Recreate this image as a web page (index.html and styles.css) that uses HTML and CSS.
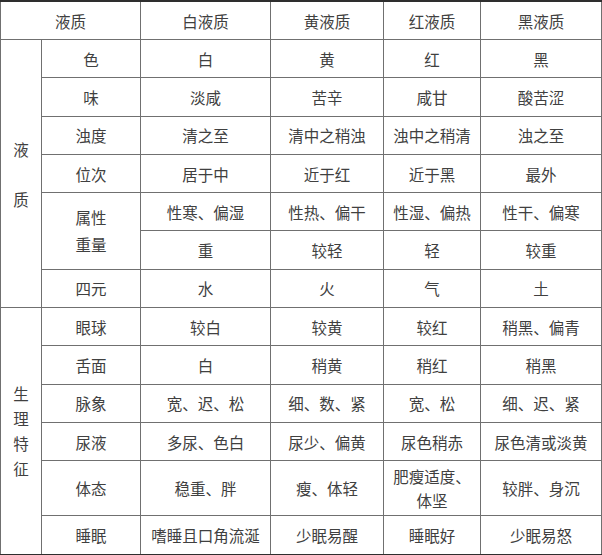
FILE: index.html
```html
<!DOCTYPE html>
<html lang="zh">
<head>
<meta charset="utf-8">
<link rel="stylesheet" href="styles.css">
</head>
<body>
<table class="grid">
  <colgroup>
    <col class="c0"><col class="c1"><col class="c2"><col class="c3"><col class="c4"><col class="c5">
  </colgroup>
  <tr class="head">
    <td colspan="2">液质</td><td>白液质</td><td>黄液质</td><td>红液质</td><td>黑液质</td>
  </tr>
  <tr class="r">
    <td rowspan="7" class="group g1">液<br>质</td>
    <td>色</td><td>白</td><td>黄</td><td>红</td><td>黑</td>
  </tr>
  <tr class="r"><td>味</td><td>淡咸</td><td>苦辛</td><td>咸甘</td><td>酸苦涩</td></tr>
  <tr class="r"><td>浊度</td><td>清之至</td><td>清中之稍浊</td><td>浊中之稍清</td><td>浊之至</td></tr>
  <tr class="r"><td>位次</td><td>居于中</td><td>近于红</td><td>近于黑</td><td>最外</td></tr>
  <tr class="r"><td rowspan="2" class="two">属性<br>重量</td><td>性寒、偏湿</td><td>性热、偏干</td><td>性湿、偏热</td><td>性干、偏寒</td></tr>
  <tr class="r"><td>重</td><td>较轻</td><td>轻</td><td>较重</td></tr>
  <tr class="r"><td>四元</td><td>水</td><td>火</td><td>气</td><td>土</td></tr>
  <tr class="r sep">
    <td rowspan="6" class="group g2">生<br>理<br>特<br>征</td>
    <td>眼球</td><td>较白</td><td>较黄</td><td>较红</td><td>稍黑、偏青</td>
  </tr>
  <tr class="r"><td>舌面</td><td>白</td><td>稍黄</td><td>稍红</td><td>稍黑</td></tr>
  <tr class="r"><td>脉象</td><td>宽、迟、松</td><td>细、数、紧</td><td>宽、松</td><td>细、迟、紧</td></tr>
  <tr class="r"><td>尿液</td><td>多尿、色白</td><td>尿少、偏黄</td><td>尿色稍赤</td><td>尿色清或淡黄</td></tr>
  <tr class="r tall"><td>体态</td><td>稳重、胖</td><td>瘦、体轻</td><td class="two2">肥瘦适度、<br>体坚</td><td>较胖、身沉</td></tr>
  <tr class="r last"><td>睡眠</td><td>嗜睡且口角流涎</td><td>少眠易醒</td><td>睡眠好</td><td>少眠易怒</td></tr>
</table>
</body>
</html>
```

FILE: styles.css
```css
html, body {
  margin: 0;
  padding: 0;
  background: #ffffff;
}

.grid {
  border-collapse: collapse;
  table-layout: fixed;
  width: 601px;
  font-family: "Noto Sans CJK SC", "Noto Sans CJK JP", sans-serif;
  font-size: 15.5px;
  color: #404040;
  border-top: 2px solid #2e2e2e;
  border-bottom: 2px solid #2e2e2e;
}

.c0 { width: 41px; }
.c1 { width: 99px; }
.c2 { width: 130px; }
.c3 { width: 113px; }
.c4 { width: 97px; }
.c5 { width: 121px; }

.grid td {
  border: 1px solid #707070;
  padding: 0;
  text-align: center;
  vertical-align: middle;
  line-height: 20px;
  white-space: nowrap;
}

.grid tr:first-child td {
  border-top: 2px solid #2e2e2e;
}

.grid tr.last td {
  border-bottom: 2px solid #2e2e2e;
}

.head { height: 38.5px; }
.r { height: 38.3px; }
.r.tall { height: 55px; }
.r.last { height: 39px; }

.grid .g1 { line-height: 50px; }
.grid .g2 { line-height: 25px; }
.grid .two { line-height: 27px; }
.grid .two2 { line-height: 24px; }
```
